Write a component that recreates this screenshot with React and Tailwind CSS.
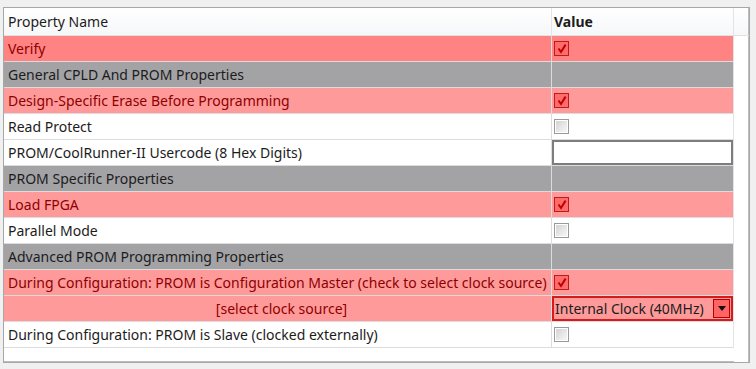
import React from "react";

const rows = [
  { label: "Verify", kind: "hot", value: "checked" },
  { label: "General CPLD And PROM Properties", kind: "group" },
  { label: "Design-Specific Erase Before Programming", kind: "red", value: "checked" },
  { label: "Read Protect", kind: "plain", value: "unchecked" },
  { label: "PROM/CoolRunner-II Usercode (8 Hex Digits)", kind: "plain", value: "text" },
  { label: "PROM Specific Properties", kind: "group" },
  { label: "Load FPGA", kind: "red", value: "checked" },
  { label: "Parallel Mode", kind: "plain", value: "unchecked" },
  { label: "Advanced PROM Programming Properties", kind: "group" },
  {
    label: "During Configuration: PROM is Configuration Master (check to select clock source)",
    kind: "red",
    value: "checked",
  },
  { label: "[select clock source]", kind: "red", value: "select", center: true },
  { label: "During Configuration: PROM is Slave (clocked externally)", kind: "plain", value: "unchecked" },
];

const rowBg = {
  hot: "bg-[#ff8383] text-[#8e0000]",
  red: "bg-[#ff9a9a] text-[#8e0000]",
  group: "bg-[#a3a3a6] text-[#1c1c1c]",
  plain: "bg-white text-[#1c1c1c]",
};

function CheckBox({ checked }) {
  if (checked) {
    return (
      <div className="w-[15px] h-[15px] border border-[#c21a1a] bg-[#ff6c6c] flex items-center justify-center">
        <svg width="10" height="11" viewBox="0 0 10 11">
          <path d="M1.5 5.5 L4 9 L8.6 1.6" stroke="#c00000" strokeWidth="2" fill="none" />
        </svg>
      </div>
    );
  }
  return (
    <div className="w-[15px] h-[15px] border border-[#9a9a9a] bg-white p-[1px]">
      <div className="w-full h-full bg-gradient-to-br from-[#d4d4d4] to-[#f7f7f7]" />
    </div>
  );
}

function ValueCell({ value }) {
  if (value === "checked" || value === "unchecked") {
    return (
      <div className="h-full flex items-center pl-[2px]">
        <CheckBox checked={value === "checked"} />
      </div>
    );
  }
  if (value === "text") {
    return <div className="h-[25px] border-2 border-[#7d7d7d] bg-white" />;
  }
  if (value === "select") {
    return (
      <div className="h-[25px] flex items-center border-2 border-[#d41c1c] bg-[#ff9a9a] pl-[1px] pr-[1px]">
        <span className="flex-1 text-[14px] text-[#1c1c1c] whitespace-nowrap">Internal Clock (40MHz)</span>
        <div className="w-[17px] h-[19px] border border-[#b40000] bg-[#ff6464] flex items-center justify-center">
          <svg width="8" height="5" viewBox="0 0 8 5">
            <path d="M0 0 H8 L4 5 Z" fill="#111" />
          </svg>
        </div>
      </div>
    );
  }
  return null;
}

export default function App() {
  return (
    <div
      className="w-[756px] h-[369px] bg-[#f0f0f0] pt-[7px] pl-[3px]"
      style={{ fontFamily: '"Segoe UI", "Noto Sans", sans-serif' }}
    >
      <div className="w-[747px] h-[356px] border border-[#a7a7a7] bg-white flex flex-col text-[14px]">
        <div className="flex h-[28px] border-b border-[#e2e2e2] bg-gradient-to-b from-white to-[#f6f7f9] text-[#1c1c1c]">
          <div className="w-[547px] flex items-center pl-[4px]">Property Name</div>
          <div className="w-[182px] border-l border-[#e4e4e4] flex items-center pl-[2px] font-bold">
            Value
          </div>
          <div className="flex-1 border-l border-[#e4e4e4] border-r border-r-[#bdbdbd]" />
        </div>
        {rows.map((r) => (
          <div key={r.label} className="flex h-[26px]">
            <div
              className={`w-[547px] flex items-center border-b border-[#dcdcdc] ${rowBg[r.kind]} ${
                r.center ? "justify-center pl-[8px]" : "pl-[4px]"
              }`}
            >
              <span className="whitespace-nowrap">{r.label}</span>
            </div>
            <div className={`w-[182px] border-l border-b border-[#dcdcdc] ${rowBg[r.kind]}`}>
              <ValueCell value={r.value} />
            </div>
            <div className="flex-1 border-l border-[#e4e4e4] border-r border-r-[#bdbdbd]" />
          </div>
        ))}
        <div className="flex-1 flex">
          <div className="w-[730px] border-b border-[#bdbdbd]" />
          <div className="flex-1 border-r border-[#bdbdbd]" />
        </div>
      </div>
    </div>
  );
}
